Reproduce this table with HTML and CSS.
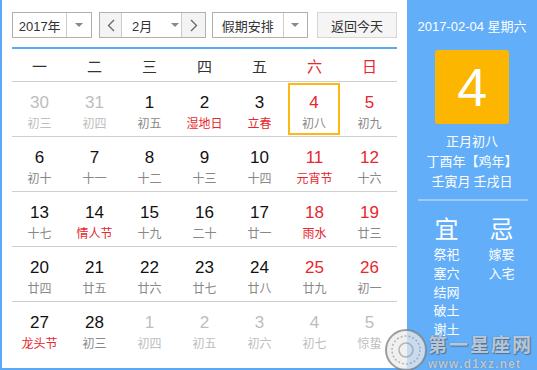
FILE: index.html
```html
<!DOCTYPE html>
<html>
<head>
<meta charset="utf-8">
<link rel="stylesheet" href="styles.css">
</head>
<body>
<div class="wrap">
  <div class="main">
    <div class="controls">
      <div class="sel year"><span class="sel-text">2017年</span><span class="sel-arrow"><i class="tri"></i></span></div>
      <div class="sel month">
        <span class="nav"><svg width="8" height="13" viewBox="0 0 8 13"><polyline points="7,1 1.5,6.5 7,12" fill="none" stroke="#666" stroke-width="1.3"/></svg></span>
        <span class="sel-text mtext">2月<i class="tri"></i></span>
        <span class="nav nav-r"><svg width="8" height="13" viewBox="0 0 8 13"><polyline points="1,1 6.5,6.5 1,12" fill="none" stroke="#666" stroke-width="1.3"/></svg></span>
      </div>
      <div class="sel holiday"><span class="sel-text">假期安排</span><span class="sel-arrow"><i class="tri"></i></span></div>
      <div class="btn">返回今天</div>
    </div>
    <div class="week-head">
      <span>一</span><span>二</span><span>三</span><span>四</span><span>五</span><span class="red">六</span><span class="red">日</span>
    </div>
    <div class="row">
      <div class="cell off"><b>30</b><i>初三</i></div>
      <div class="cell off"><b>31</b><i>初四</i></div>
      <div class="cell"><b>1</b><i>初五</i></div>
      <div class="cell"><b>2</b><i class="fest">湿地日</i></div>
      <div class="cell"><b>3</b><i class="fest">立春</i></div>
      <div class="cell wk today"><b>4</b><i>初八</i></div>
      <div class="cell wk"><b>5</b><i>初九</i></div>
    </div>
    <div class="row">
      <div class="cell"><b>6</b><i>初十</i></div>
      <div class="cell"><b>7</b><i>十一</i></div>
      <div class="cell"><b>8</b><i>十二</i></div>
      <div class="cell"><b>9</b><i>十三</i></div>
      <div class="cell"><b>10</b><i>十四</i></div>
      <div class="cell wk"><b>11</b><i class="fest">元宵节</i></div>
      <div class="cell wk"><b>12</b><i>十六</i></div>
    </div>
    <div class="row">
      <div class="cell"><b>13</b><i>十七</i></div>
      <div class="cell"><b>14</b><i class="fest">情人节</i></div>
      <div class="cell"><b>15</b><i>十九</i></div>
      <div class="cell"><b>16</b><i>二十</i></div>
      <div class="cell"><b>17</b><i>廿一</i></div>
      <div class="cell wk"><b>18</b><i class="fest">雨水</i></div>
      <div class="cell wk"><b>19</b><i>廿三</i></div>
    </div>
    <div class="row">
      <div class="cell"><b>20</b><i>廿四</i></div>
      <div class="cell"><b>21</b><i>廿五</i></div>
      <div class="cell"><b>22</b><i>廿六</i></div>
      <div class="cell"><b>23</b><i>廿七</i></div>
      <div class="cell"><b>24</b><i>廿八</i></div>
      <div class="cell wk"><b>25</b><i>廿九</i></div>
      <div class="cell wk"><b>26</b><i>初一</i></div>
    </div>
    <div class="row last">
      <div class="cell"><b>27</b><i class="fest">龙头节</i></div>
      <div class="cell"><b>28</b><i>初三</i></div>
      <div class="cell off"><b>1</b><i>初四</i></div>
      <div class="cell off"><b>2</b><i>初五</i></div>
      <div class="cell off"><b>3</b><i>初六</i></div>
      <div class="cell off"><b>4</b><i>初七</i></div>
      <div class="cell off"><b>5</b><i>惊蛰</i></div>
    </div>
  </div>
  <div class="side">
    <div class="s-date">2017-02-04 星期六</div>
    <div class="s-day">4</div>
    <div class="s-lunar">
      <div>正月初八</div>
      <div>丁酉年【鸡年】</div>
      <div>壬寅月 壬戌日</div>
    </div>
    <div class="s-sep"></div>
    <div class="yiji">
      <div class="col">
        <div class="big">宜</div>
        <div>祭祀</div><div>塞穴</div><div>结网</div><div>破土</div><div>谢土</div>
      </div>
      <div class="col">
        <div class="big">忌</div>
        <div>嫁娶</div><div>入宅</div>
      </div>
    </div>
  </div>
  <div class="watermark">
    <svg class="wm-logo" width="44" height="44" viewBox="0 0 44 44">
      <circle cx="22" cy="22" r="20" fill="rgba(235,235,235,0.75)" stroke="rgba(120,120,120,0.7)" stroke-width="2"/>
      <circle cx="22" cy="22" r="14" fill="none" stroke="rgba(140,140,140,0.6)" stroke-width="1.5" stroke-dasharray="2 2"/>
      <circle cx="22" cy="22" r="7" fill="none" stroke="rgba(140,140,140,0.6)" stroke-width="1.5"/>
    </svg>
    <div class="wm-text">
      <div class="wm-name">第一星座网</div>
      <div class="wm-url">www.d1xz.net</div>
    </div>
  </div>
</div>
</body>
</html>
```

FILE: styles.css
```css
html, body {
  margin: 0;
  padding: 0;
  background: #fff;
}
.wrap {
  position: relative;
  display: flex;
  width: 537px;
  height: 370px;
  overflow: hidden;
  font-family: "Liberation Sans", Arial, "Noto Sans CJK SC", sans-serif;
}
.main {
  box-sizing: border-box;
  width: 407px;
  height: 370px;
  border-left: 2px solid #5aa9f6;
  border-bottom: 2px solid #5aa9f6;
  padding: 12px 10px 0 10px;
  background: #fff;
}
.controls {
  display: flex;
  height: 26px;
  padding-bottom: 9px;
  border-bottom: 2px solid #5aa9f6;
  width: 385px;
}
.sel {
  box-sizing: border-box;
  display: flex;
  height: 26px;
  border: 1px solid #b0b0b0;
  background: #fff;
  font-size: 13px;
  color: #333;
}
.sel-text {
  display: flex;
  align-items: center;
  justify-content: center;
}
.sel-arrow {
  display: flex;
  align-items: center;
  justify-content: center;
  width: 24px;
  border-left: 1px solid #ccc;
}
.tri {
  display: block;
  width: 0;
  height: 0;
  border-left: 4px solid transparent;
  border-right: 4px solid transparent;
  border-top: 4px solid #888;
}
.year { width: 80px; }
.year .sel-text { width: 54px; }
.month {
  width: 107px;
  margin-left: 7px;
}
.nav {
  display: flex;
  align-items: center;
  justify-content: center;
  width: 21px;
  background: #f3f3f3;
}
.nav-r {
  width: 23px;
  border-left: 1px solid #ccc;
}
.mtext {
  width: 60px;
  border-left: 1px solid #ccc;
  justify-content: flex-start;
  padding-left: 10px;
  box-sizing: border-box;
}
.mtext .tri {
  margin-left: 19px;
}
.holiday {
  width: 96px;
  margin-left: 6px;
}
.holiday .sel-text { width: 71px; }
.btn {
  box-sizing: border-box;
  width: 83px;
  height: 26px;
  margin-left: 9px;
  border: 1px solid #d6d6d6;
  background: #f5f5f5;
  font-size: 13px;
  color: #333;
  display: flex;
  align-items: center;
  justify-content: center;
}
.week-head {
  display: grid;
  grid-template-columns: repeat(7, 55px);
  height: 32px;
  border-bottom: 1px solid #cfcfcf;
  font-family: "Noto Sans CJK SC", sans-serif;
  font-size: 15px;
  color: #333;
  align-items: center;
  text-align: center;
  width: 385px;
}
.red { color: #e8262d; }
.row {
  display: grid;
  grid-template-columns: repeat(7, 55px);
  height: 54px;
  border-bottom: 1px solid #cfcfcf;
  width: 385px;
}
.row.last { border-bottom: none; }
.cell {
  box-sizing: border-box;
  padding-top: 11px;
  text-align: center;
}
.cell b {
  display: block;
  font-weight: normal;
  font-size: 17px;
  line-height: 20px;
  color: #111;
}
.cell i {
  display: block;
  font-style: normal;
  font-size: 12px;
  line-height: 20px;
  color: #888;
  font-family: "Noto Sans CJK SC", sans-serif;
}
.cell.wk b { color: #e8262d; }
.cell i.fest { color: #e8262d; }
.cell.off b, .cell.off i { color: #bdbdbd; }
.cell.today {
  border: 2px solid #fdb813;
  margin: 1px 2px 1px 1px;
  padding-top: 8px;
}
.side {
  width: 130px;
  height: 370px;
  background: #62aef9;
  color: #fff;
  text-align: center;
  padding-top: 17px;
  box-sizing: border-box;
}
.s-date {
  font-size: 13px;
  line-height: 20px;
}
.s-day {
  width: 74px;
  height: 74px;
  margin: 13px auto 0;
  background: #fdb600;
  border-radius: 3px;
  font-size: 54px;
  line-height: 74px;
  color: #fff;
}
.s-lunar {
  margin-top: 7px;
  font-family: "Noto Sans CJK SC", sans-serif;
  font-size: 13px;
  line-height: 20px;
}
.s-sep {
  height: 2px;
  background: #9ccbfa;
  margin: 8px 9px 0 11px;
}
.yiji {
  display: flex;
  padding-left: 12px;
  margin-top: 12px;
  font-family: "Noto Sans CJK SC", sans-serif;
  font-size: 13px;
  line-height: 18.75px;
}
.yiji .col {
  width: 55px;
}
.yiji .big {
  font-size: 24px;
  line-height: 30px;
  margin-bottom: 2px;
}
.watermark {
  position: absolute;
  left: 384px;
  top: 328px;
  display: flex;
  align-items: center;
  pointer-events: none;
}
.wm-logo {
  flex: none;
}
.wm-text {
  opacity: 0.85;
  padding-top: 4px;
}
.wm-name {
  font-family: "Noto Sans CJK SC", sans-serif;
  font-weight: bold;
  font-size: 19px;
  line-height: 19px;
  letter-spacing: 2px;
  color: rgba(230, 236, 245, 0.8);
  text-shadow: 0 0 1px #555, 1px 1px 1px rgba(60,60,60,0.6);
}
.wm-url {
  font-family: "Liberation Sans", Arial, sans-serif;
  font-weight: bold;
  font-size: 12px;
  line-height: 13px;
  margin-top: 5px;
  letter-spacing: 1.2px;
  color: rgba(230, 236, 245, 0.8);
  text-shadow: 0 0 1px #555;
}
```
